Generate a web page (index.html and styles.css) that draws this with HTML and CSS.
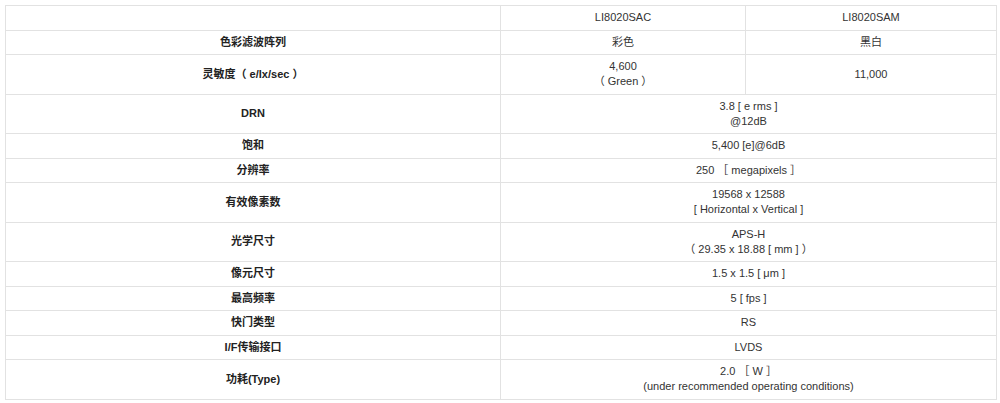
FILE: index.html
```html
<!DOCTYPE html>
<html lang="zh-CN">
<head>
<meta charset="utf-8">
<link rel="stylesheet" href="styles.css">
</head>
<body>
<div class="wrap">
<table class="spec">
  <colgroup><col class="c1"><col class="c2"><col class="c3"></colgroup>
  <tr><th></th><td>LI8020SAC</td><td>LI8020SAM</td></tr>
  <tr><th>色彩滤波阵列</th><td>彩色</td><td>黑白</td></tr>
  <tr><th>灵敏度（ e/lx/sec ）</th><td>4,600<br>（ Green ）</td><td>11,000</td></tr>
  <tr><th>DRN</th><td colspan="2">3.8 [ e rms ]<br>@12dB</td></tr>
  <tr><th>饱和</th><td colspan="2">5,400 [e]@6dB</td></tr>
  <tr><th>分辨率</th><td colspan="2">250 ［ megapixels ］</td></tr>
  <tr><th>有效像素数</th><td colspan="2">19568 x 12588<br>[ Horizontal x Vertical ]</td></tr>
  <tr><th>光学尺寸</th><td colspan="2">APS-H<br>（ 29.35 x 18.88 [ mm ] ）</td></tr>
  <tr><th>像元尺寸</th><td colspan="2">1.5 x 1.5 [ μm ]</td></tr>
  <tr><th>最高频率</th><td colspan="2">5 [ fps ]</td></tr>
  <tr><th>快门类型</th><td colspan="2">RS</td></tr>
  <tr><th>I/F传输接口</th><td colspan="2">LVDS</td></tr>
  <tr><th>功耗(Type)</th><td colspan="2">2.0 ［ W ］<br>(under recommended operating conditions)</td></tr>
</table>
</div>
</body>
</html>
```
FILE: styles.css
```css
html, body {
  margin: 0;
  padding: 0;
  background: #fff;
}
.wrap {
  padding: 5px 4px 0 5px;
}
.spec {
  width: 991px;
  border-collapse: collapse;
  table-layout: fixed;
  font-family: "Liberation Sans", Arial, "Noto Sans CJK SC", sans-serif;
  font-size: 11px;
  line-height: 15px;
  color: #333;
}
.c1 { width: 495px; }
.c2 { width: 245px; }
.c3 { width: 251px; }
.spec th, .spec td {
  border: 1px solid #e2e2e2;
  padding: 4.25px 4px;
  text-align: center;
  vertical-align: middle;
}
.spec th {
  font-weight: bold;
  color: #222;
}
```
